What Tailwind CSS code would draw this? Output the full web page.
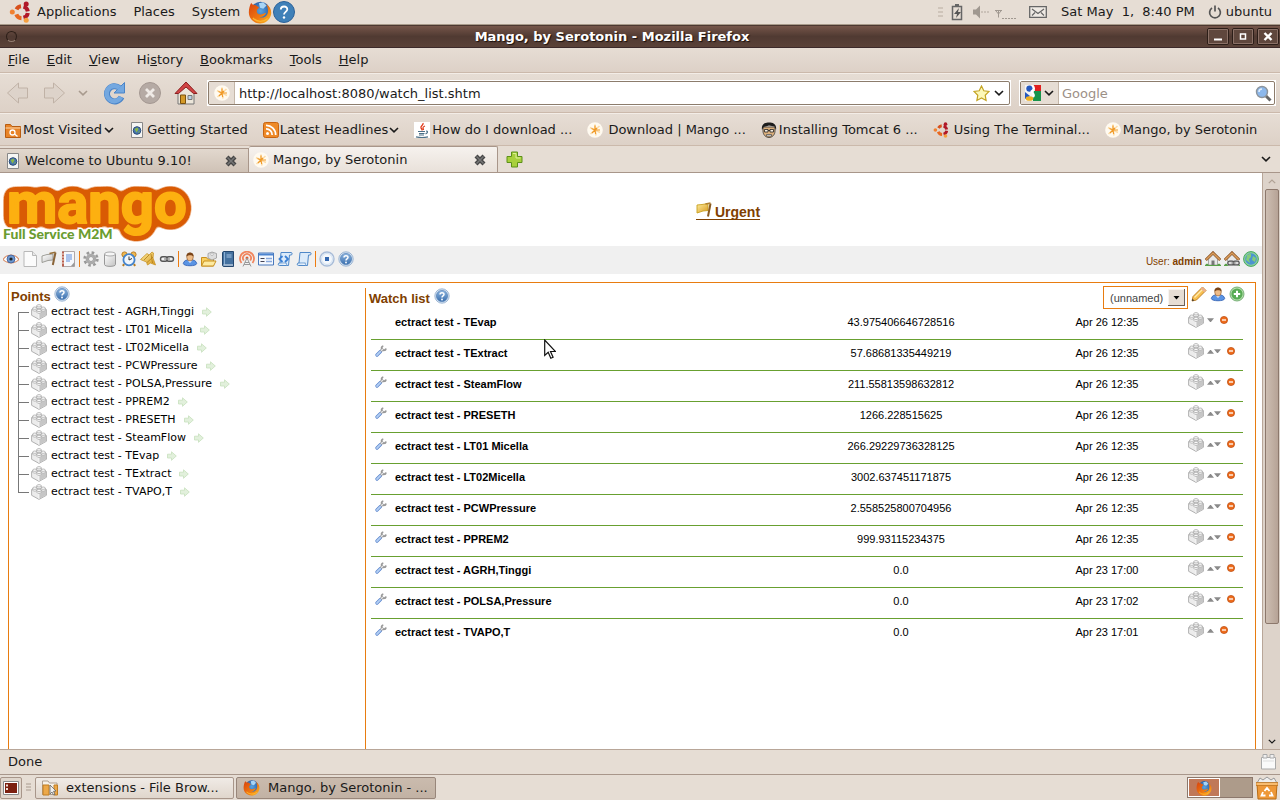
<!DOCTYPE html>
<html lang="en">
<head>
  <meta charset="UTF-8" />
  <meta name="viewport" content="width=device-width, initial-scale=1.0" />
  <title>Mango, by Serotonin</title>
  <script src="https://cdn.jsdelivr.net/npm/@tailwindcss/browser@4"></script>
</head>
<body class="h-screen flex flex-col overflow-hidden bg-[#e6ddd4] font-['DejaVu_Sans',sans-serif] text-[13px] leading-4 text-[#1a1a1a]">

<!-- Icon sprite -->
<svg class="absolute size-0">
  <defs>
    <linearGradient id="gBlue" x1="0" y1="0" x2="0" y2="1"><stop offset="0" stop-color="#8fb6e0"/><stop offset="1" stop-color="#3a6fae"/></linearGradient>
    <linearGradient id="gFox" x1="0" y1="0" x2="1" y2="1"><stop offset="0" stop-color="#d8400c"/><stop offset=".6" stop-color="#f07c12"/><stop offset="1" stop-color="#fbc02a"/></linearGradient>
    <linearGradient id="gGrey" x1="0" y1="0" x2="1" y2="1"><stop offset="0" stop-color="#fff"/><stop offset="1" stop-color="#c2c2c2"/></linearGradient>
    <linearGradient id="gGold" x1="0" y1="0" x2="1" y2="1"><stop offset="0" stop-color="#fdeea0"/><stop offset="1" stop-color="#d99a20"/></linearGradient>
    <radialGradient id="gGlobe"><stop offset="0" stop-color="#5aa4e0"/><stop offset="1" stop-color="#2d62a8"/></radialGradient>
    <!-- fat rounded outline around the logo lettering -->
    <filter id="outline" x="-10%" y="-20%" width="120%" height="140%" color-interpolation-filters="sRGB">
      <feGaussianBlur in="SourceAlpha" stdDeviation="4"/>
      <feComponentTransfer result="fat"><feFuncA type="linear" slope="16" intercept="-1"/></feComponentTransfer>
      <feFlood flood-color="#d95b04"/>
      <feComposite in2="fat" operator="in"/>
      <feMerge><feMergeNode/><feMergeNode in="SourceGraphic"/></feMerge>
    </filter>
  </defs>
  <symbol id="ubuntu" viewBox="0 0 22 22">
    <g fill="none" stroke-width="4">
      <path d="M7.500 8.300A5.800 5.800 0 0 1 12 5.200" stroke="#d8501c"/>
      <path d="M14.500 5.600A6 6 0 0 1 18.800 10.300" stroke="#b01828"/>
      <path d="M18.800 12A6 6 0 0 1 14.500 16.800" stroke="#b01828"/>
      <path d="M12.500 17.200A5.800 5.800 0 0 1 7.300 13.300" stroke="#e86820"/>
    </g>
    <circle cx="3.300" cy="11" r="2.500" fill="#f08030"/><circle cx="17.200" cy="3" r="2.500" fill="#b01828"/><circle cx="17.200" cy="19.200" r="2.500" fill="#f5a040"/>
  </symbol>
  <symbol id="firefox" viewBox="0 0 22 22">
    <circle cx="11.500" cy="10" r="8.500" fill="url(#gGlobe)"/>
    <path d="M10 3l4-1 3 3-3 3-3-1z" fill="#a8d4f4"/>
    <path d="M3 2.500C3.500 4 4.500 4.500 6.500 4.500 8 4.800 8.500 6 10 6.500 10 8 8 8.500 8 10 8 12 9.500 13.500 12 13.200 14 13 15 11.500 16.500 12 15.500 15 12.500 16 10.500 15.500 14.500 17.500 18.500 14.500 18.300 10 18.500 7.500 17.500 5.500 16.500 4 20.500 6 22 10 21 14 19.500 19 15 22 10.500 21.500 5 21 1 17 .8 12 .600 9 1.500 5 3 2.500z" fill="url(#gFox)"/>
    <path d="M4.500 16.500C8 20.500 14 20.500 18 17" fill="none" stroke="#fcb42c" stroke-width="1.300"/>
  </symbol>
  <symbol id="help" viewBox="0 0 16 16">
    <circle cx="8" cy="8" r="7.200" fill="#d4e2f2" stroke="#8aa8cc" stroke-width=".8"/>
    <circle cx="8" cy="8" r="5.600" fill="url(#gBlue)" stroke="#4a78b0" stroke-width=".6"/>
    <path d="M6 6.600C6 4.200 10 4.200 10 6.500 10 8 8 7.800 8 9.500" fill="none" stroke="#fff" stroke-width="1.500"/><circle cx="8" cy="11.500" r=".9" fill="#fff"/>
  </symbol>
  <symbol id="chev" viewBox="0 0 10 6"><path d="M1 1l4 3.800L9 1" fill="none" stroke="currentColor" stroke-width="1.600"/></symbol>
  <symbol id="mangoicon" viewBox="0 0 16 16">
    <circle cx="8" cy="8" r="7.800" fill="#fffaf0"/>
    <path d="M8 8V2.500M8 8L3 5.500M8 8l-4.500 4M8 8l1 5.500M8 8l5 2.500M8 8l4.500-4" stroke="#fcdca8" stroke-width="1.600"/>
    <path d="M8 8V3.500M8 8L4.500 6.500M8 8l-3 3M8 8l.7 4M8 8h5M8 8l2-2" stroke="#f09a28" stroke-width="1.100"/>
  </symbol>
  <symbol id="doc" viewBox="0 0 16 16">
    <path d="M2.500.500h11v15h-11z" fill="#f6f6f4" stroke="#888"/><circle cx="8" cy="8.500" r="3.800" fill="#4878b0" stroke="#2c4c78"/><path d="M5.500 7l3-1.500 1 2-2 3zM9 10l2-1-1 2z" fill="#8cb848"/>
  </symbol>
  <symbol id="closex" viewBox="0 0 14 14"><path d="M3 3l8 8M11 3l-8 8" stroke="#454545" stroke-width="4.200"/><path d="M3.500 3.500l7 7M10.500 3.500l-7 7" stroke="#777" stroke-width="1.500"/></symbol>
  <symbol id="brick" viewBox="0 0 16 16">
    <path d="M.6 5.500L8 2l7.400 3.500v5.800L8 15.400.6 11.300z" fill="#ececec" stroke="#a0a0a0" stroke-width=".8"/>
    <path d="M8 8.800l7-3.200v5.500L8 15z" fill="#c6c6c6"/><path d="M8 8.800V15" stroke="#fff" stroke-width=".7"/>
    <g fill="#fafafa" stroke="#a0a0a0" stroke-width=".7">
      <path d="M5.800 1.800v2c0 1.300 4.400 1.300 4.400 0v-2"/><ellipse cx="8" cy="1.800" rx="2.200" ry="1.200"/>
      <path d="M1.700 4.200v2c0 1.300 4.200 1.300 4.200 0v-2"/><ellipse cx="3.800" cy="4.200" rx="2.100" ry="1.200"/>
      <path d="M10.100 4.200v2c0 1.300 4.200 1.300 4.200 0v-2"/><ellipse cx="12.200" cy="4.200" rx="2.100" ry="1.200"/>
      <path d="M5.900 6.400v2c0 1.300 4.200 1.300 4.200 0v-2"/><ellipse cx="8" cy="6.400" rx="2.100" ry="1.200"/>
    </g>
  </symbol>
  <symbol id="arrow" viewBox="0 0 10 10"><path d="M.5 3.200h4V.8L9.300 5 4.500 9.300V7h-4z" fill="#e2f0dc" stroke="#c6dfbd" stroke-width=".8"/></symbol>
  <symbol id="up" viewBox="0 0 8 5"><path d="M0 5h8L4.500.800h-1z" fill="#8a8a8a"/></symbol>
  <symbol id="down" viewBox="0 0 8 5"><path d="M0 0h8L4.500 4.200h-1z" fill="#8a8a8a"/></symbol>
  <symbol id="minus" viewBox="0 0 8 8"><circle cx="4" cy="4" r="3.600" fill="#ee6c1c" stroke="#b8480c" stroke-width=".7"/><path d="M2 4h4" stroke="#fff" stroke-width="1.300"/></symbol>
  <symbol id="wrench" viewBox="0 0 12 12"><path d="M2 10L5.500 6.500" stroke="#5a84cc" stroke-width="3.200" stroke-linecap="round"/><path d="M2 10L5.300 6.700" stroke="#b4d0f4" stroke-width="1.800" stroke-linecap="round"/><path d="M5.800 6L8.200 3.800" stroke="#999" stroke-width="2.600"/><path d="M11 3.500A2.200 2.200 0 1 1 8.300 1" fill="none" stroke="#999" stroke-width="1.800"/><path d="M6 5.800L8 4" stroke="#e4e4e4" stroke-width="1.200"/></symbol>
  <symbol id="flag" viewBox="0 0 16 16"><path d="M1 5l5-1.500 6-.5v6l-5 .5-6 2z" fill="url(#gGrey)" stroke="#8c8c84" stroke-width=".8"/><path d="M14.500 1.500L11.800 14" stroke="#8a6438" stroke-width="2"/><path d="M8.500 2.500l6-1.200" stroke="#96703a" stroke-width="1.500"/></symbol>
  <symbol id="goldflag" viewBox="0 0 16 16"><path d="M1 3l5-.500 6-1v7l-5 .5-6 2z" fill="url(#gGold)" stroke="#c8a020" stroke-width=".9"/><path d="M14.500 1.500L12 14.500" stroke="#8a5a20" stroke-width="2"/><path d="M9.500 2l5-1" stroke="#b08030" stroke-width="1.500"/></symbol>
  <symbol id="user" viewBox="0 0 16 16">
    <path d="M1.300 12.500C2 9.500 4 8.800 8 8.800s6 .7 6.700 3.700C14.500 15.500 1.500 15.500 1.300 12.500z" fill="#5a94e4" stroke="#2c5cb0" stroke-width=".8"/>
    <path d="M5.500 9.200L8 12l2.500-2.800z" fill="#e8f0fc"/><ellipse cx="8" cy="6" rx="3.300" ry="4" fill="#eebc88" stroke="#8a5424" stroke-width=".6"/>
    <path d="M4.500 5.500C3.800 0 12.200 0 11.500 5.500 10 3.800 6.500 3.600 4.500 5.500z" fill="#7a4418"/>
  </symbol>
  <symbol id="house" viewBox="0 0 16 16">
    <path d="M3.500 8L8 3.500 12.500 8v6h-9z" fill="#e8e8e8" stroke="#8c8c8c" stroke-width=".7"/><path d="M.8 9L8 1.800 15.200 9" fill="none" stroke="#8a5020" stroke-width="2.800"/><path d="M1.200 8.600L8 2l6.800 6.600" fill="none" stroke="#d89c5c" stroke-width="1.500"/>
    <path d="M6.500 9.500h3V14h-3z" fill="#777"/><path d="M0 14.500c1-2.500 3-2.500 4 0M12 14.500c1-2.500 3-2.500 4 0z" fill="#58a048"/><path d="M0 14.500h16" stroke="#58a048"/>
  </symbol>
  <symbol id="chain" viewBox="0 0 16 16"><g fill="none" stroke="#555" stroke-width="1.400"><rect x="1.500" y="5.800" width="7" height="4.400" rx="2.200"/><rect x="7.500" y="5.800" width="7" height="4.400" rx="2.200"/></g><path d="M5 8h6" stroke="#999" stroke-width="1.400"/></symbol>
  <symbol id="scroll" viewBox="0 0 16 16"><path d="M4 1.500h10c1.500 0 1.500 2.500 0 2.500h-1.500L11.500 14.500H2.500C.8 14.500.8 12 2.500 12H3z" fill="#dcebfa" stroke="#4f88c8"/><path d="M2.500 12h7c-.8 1 0 2 1.200 2.400" fill="#fff" stroke="#4f88c8" stroke-width=".8"/></symbol>
</svg>

<!-- Desktop panel -->
<header class="h-[25px] shrink-0 flex items-center border-b border-[#a89a8a] pl-2 pr-2">
  <svg class="w-[24px] h-[22px]"><use href="#ubuntu"/></svg>
  <nav class="flex gap-[17px] pl-[5px]">
    <button>Applications</button><button>Places</button><button>System</button>
  </nav>
  <button class="ml-2" aria-label="Firefox"><svg class="size-6"><use href="#firefox"/></svg></button>
  <button aria-label="Help">
    <svg class="size-6" viewBox="0 0 24 24"><circle cx="12" cy="12" r="10.500" fill="#3f80b8" stroke="#2c629a"/><path d="M8.800 9.500C8.800 5.500 15.500 5.500 15.300 9.500 15 11.800 12 12 12 14.500" fill="none" stroke="#fff" stroke-width="1.800"/><circle cx="12" cy="17.500" r="1.200" fill="#fff"/></svg>
  </button>
  <div class="ml-auto flex items-center">
    <svg class="w-[5px] h-3 mr-2" viewBox="0 0 5 12"><path d="M0 2h5M0 6h5M0 10h5" stroke="#b8aca0"/></svg>
    <svg class="w-3 h-[18px] mr-[10px]" viewBox="0 0 12 18"><path d="M1.500 3.500h9v13h-9z" fill="none" stroke="#666" stroke-width="1.500"/><path d="M4 1h4v2H4z" fill="#666"/><path d="M8 5l-5 6h3l-1 4 5-6H7z" fill="#555"/></svg>
    <svg class="w-4 h-[14px] mr-[6px]" viewBox="0 0 16 14"><path d="M0 4.500h3l4-4v13l-4-4H0z" fill="#a09890"/><path d="M8 7h8" stroke="#b0a69c" stroke-dasharray="2 1"/></svg>
    <svg class="w-[22px] h-[14px] mr-3 mt-2" viewBox="0 0 22 14"><path d="M0 1.500h7M1 2l2.500 3L6 2M3.500 1v7.500" fill="none" stroke="#a09890"/><path d="M7 9.500h15" stroke="#a09890" stroke-dasharray="2 1"/></svg>
    <svg class="w-[18px] h-3 mr-[14px]" viewBox="0 0 18 12"><path d="M.7.700h16.600v10.600H.7z" fill="#efeae4" stroke="#666" stroke-width="1.300"/><path d="M3 3l6 4.500L15 3M3 9.500l3-3M15 9.500l-3-3" fill="none" stroke="#666" stroke-width="1.200"/></svg>
    <button class="whitespace-pre">Sat May  1,  8:40 PM</button>
    <svg class="w-[14px] h-[14px] ml-[13px] mr-1" viewBox="0 0 14 14"><path d="M4 3a5.400 5.400 0 1 0 6 0M7 .500v6" fill="none" stroke="#555" stroke-width="1.700"/></svg>
    <button>ubuntu</button>
  </div>
</header>

<!-- Window title bar -->
<div class="h-[23px] shrink-0 flex items-center border-y border-t-[#4c3830] border-b-[#3c2a2a] bg-linear-to-b from-[#76564a] via-[#503a32] to-[#5a4238] px-[6px]">
  <button class="size-[11px] rounded-full border border-[#2c1e18] border-b-[#927c70]" aria-label="Window menu"></button>
  <h1 class="flex-1 text-center font-bold text-white [text-shadow:1px_1px_1px_#1a100c]">Mango, by Serotonin - Mozilla Firefox</h1>
  <div class="flex gap-[3px] -mr-[5px]">
    <button class="w-[22px] h-[17px] border border-[#2c1e18] bg-[#5f473d] rounded-xs" aria-label="Minimize"><svg class="size-full" viewBox="0 0 20 15"><path d="M.5.500h19v14H.5z" fill="none" stroke="#8a7066"/><path d="M6 10.500h8" stroke="#fff" stroke-width="2"/></svg></button>
    <button class="w-[22px] h-[17px] border border-[#2c1e18] bg-[#5f473d] rounded-xs" aria-label="Maximize"><svg class="size-full" viewBox="0 0 20 15"><path d="M.5.500h19v14H.5z" fill="none" stroke="#8a7066"/><path d="M7.500 5h5v5h-5z" fill="none" stroke="#fff" stroke-width="1.500"/></svg></button>
    <button class="w-[22px] h-[17px] border border-[#2c1e18] bg-[#5f473d] rounded-xs" aria-label="Close"><svg class="size-full" viewBox="0 0 20 15"><path d="M.5.500h19v14H.5z" fill="none" stroke="#8a7066"/><path d="M6.500 4l7 7M13.500 4l-7 7" stroke="#fff" stroke-width="2.400"/></svg></button>
  </div>
</div>

<!-- Menu bar -->
<nav class="h-[25px] shrink-0 flex items-center gap-px bg-linear-to-b from-[#e6ddd4] to-[#ddd1c7] border-b border-[#cbb9ab]">
  <button class="px-2"><u>F</u>ile</button>
  <button class="px-2"><u>E</u>dit</button>
  <button class="px-2"><u>V</u>iew</button>
  <button class="px-2">Hi<u>s</u>tory</button>
  <button class="px-2"><u>B</u>ookmarks</button>
  <button class="px-2"><u>T</u>ools</button>
  <button class="px-2"><u>H</u>elp</button>
</nav>

<!-- Navigation toolbar -->
<div class="h-10 shrink-0 flex items-center bg-linear-to-b from-[#e6ddd4] to-[#ddd1c7] border-t border-t-[#f3ede7] border-b border-b-[#cbb9ab] pl-[6px] pr-1">
  <button class="mr-3" aria-label="Back"><svg class="size-6" viewBox="0 0 24 24"><path d="M1.500 12L12.500 2v5h9v10h-9v5z" fill="#ddd3ca" stroke="#c0b2a6"/></svg></button>
  <button class="mr-3" aria-label="Forward"><svg class="size-6" viewBox="0 0 24 24"><path d="M22.500 12L11.500 2v5h-9v10h9v5z" fill="#ddd3ca" stroke="#c0b2a6"/></svg></button>
  <button class="mr-[14px] text-[#a89a8e]" aria-label="Recent pages"><svg class="w-[10px] h-[6px]"><use href="#chev"/></svg></button>
  <button class="mr-3" aria-label="Reload"><svg class="size-6" viewBox="0 0 24 24"><path d="M17.500 7A7.600 7.600 0 1 0 19.500 16" fill="none" stroke="#4a84c8" stroke-width="6"/><path d="M22.500 1.500V12H12z" fill="#74a8e0" stroke="#4a84c8"/><path d="M17.500 7A7.600 7.600 0 1 0 19 16" fill="none" stroke="#74a8e0" stroke-width="4.500"/></svg></button>
  <button class="mr-3" aria-label="Stop"><svg class="size-6" viewBox="0 0 24 24"><circle cx="12" cy="12" r="10.500" fill="#b5aaa4" stroke="#a49892"/><path d="M8 8l8 8M16 8l-8 8" stroke="#efeae6" stroke-width="2.800"/></svg></button>
  <button class="mr-[9px]" aria-label="Home"><svg class="size-6" viewBox="0 0 24 24"><path d="M4 11l8-8 8 8v12H4z" fill="#ece6da" stroke="#777"/><path d="M12 1L1 12.500h3.500L12 6l7.500 6.500H23z" fill="#d04444" stroke="#8c2020"/><path d="M6.500 14h5v8.500h-5z" fill="#d49a28" stroke="#7a5210"/><path d="M14 14.500h4v4h-4z" fill="#b8d0e4" stroke="#777"/></svg></button>
  <div class="flex-1 h-[26px] border border-white bg-white">
    <div class="h-full flex items-center rounded-xs border border-[#8c7c6c]">
      <span class="w-[26px] h-full flex items-center justify-center bg-[#e6ddd4] border-r border-[#c4b6a8]"><svg class="size-4"><use href="#mangoicon"/></svg></span>
      <input class="flex-1 h-full pl-1 outline-none bg-white" aria-label="Location" value="http://localhost:8080/watch_list.shtm">
      <button class="mr-1" aria-label="Bookmark this page"><svg class="size-[17px]" viewBox="0 0 17 17"><path d="M8.500 1l2.300 4.800 5.200.7-3.800 3.700.9 5.300-4.600-2.500-4.600 2.500.9-5.300L1 6.500l5.200-.7z" fill="#fdf8b8" stroke="#c4a424" stroke-width="1.200"/></svg></button>
      <button class="mr-[5px]" aria-label="Show history"><svg class="w-[10px] h-[6px]"><use href="#chev"/></svg></button>
    </div>
  </div>
  <div class="w-[257px] ml-2 h-[26px] border border-white bg-white">
    <div class="h-full flex items-center rounded-xs border border-[#8c7c6c]">
      <button class="w-[38px] h-full flex items-center justify-center gap-[3px] bg-[#e6ddd4] border-r border-[#c4b6a8]" aria-label="Search engine">
        <svg class="size-4" viewBox="0 0 16 16"><path d="M0 0h10v16H0z" fill="#f4f4f4"/><path d="M8 0h8v6H10z" fill="#e02020"/><path d="M9 6h7v10H8V9z" fill="#18944c"/><circle cx="4.500" cy="3.600" r="3.200" fill="#2458c0"/><path d="M0 7l5 4-5 3z" fill="#2458c0"/><path d="M7 0c3 3 2 5 0 6s4 3 1 6" fill="none" stroke="#fff" stroke-width="2.200"/><ellipse cx="4.500" cy="13.500" rx="3.800" ry="2.300" fill="#f0b020"/></svg>
        <svg class="w-[10px] h-[6px]"><use href="#chev"/></svg>
      </button>
      <input class="flex-1 min-w-0 h-full pl-[3px] outline-none bg-white placeholder:text-[#9c9086]" aria-label="Search" placeholder="Google">
      <button class="mr-[2px]" aria-label="Go"><svg class="size-[17px]" viewBox="0 0 17 17"><path d="M10.500 10.500l5 5" stroke="#666" stroke-width="3"/><circle cx="7" cy="7" r="5.500" fill="#8cb8ec" stroke="#8c949c" stroke-width="1.400"/><path d="M4 7a3 3 0 0 1 3-3" fill="none" stroke="#e4f0fc" stroke-width="1.500"/></svg></button>
    </div>
  </div>
</div>

<!-- Bookmarks toolbar -->
<nav class="h-[33px] shrink-0 flex items-center gap-[15px] bg-linear-to-b from-[#e6ddd4] to-[#ddd1c7] border-t border-t-[#f3ede7] border-b border-b-[#cbb9ab] pl-[5px] whitespace-nowrap">
  <button class="flex items-center gap-[2px]"><svg class="size-4" viewBox="0 0 16 16"><path d="M.5 15.500v-13h5l1.500 2h8.500v11z" fill="#e88428" stroke="#b85c10"/><path d="M.5 6h15" stroke="#fbd8b0"/><circle cx="7.500" cy="10.500" r="2.500" fill="none" stroke="#fff" stroke-width="1.300"/><path d="M9.500 12l3 2.500" stroke="#fff" stroke-width="1.300"/></svg>Most Visited<svg class="w-[10px] h-[6px]"><use href="#chev"/></svg></button>
  <a href="#" class="flex items-center gap-[2px]"><svg class="size-4"><use href="#doc"/></svg>Getting Started</a>
  <button class="flex items-center gap-px"><svg class="size-4" viewBox="0 0 16 16"><rect x=".5" y=".5" width="15" height="15" rx="2" fill="#ee8a28" stroke="#c86410"/><circle cx="4.500" cy="11.500" r="1.500" fill="#fff"/><path d="M3 6.800A6 6 0 0 1 9.200 13M3 3.300A9.500 9.500 0 0 1 12.700 13" fill="none" stroke="#fff" stroke-width="1.700"/></svg>Latest Headlines<svg class="w-[10px] h-[6px]"><use href="#chev"/></svg></button>
  <a href="#" class="flex items-center gap-[2px]"><svg class="size-4" viewBox="0 0 16 16"><path d="M0 0h16v16H0z" fill="#fff"/><path d="M9 1c1 2-3 3-2 5 .5 1 1.500 1 .8 2.500M11 4C8 5 9 6 9.500 8" fill="none" stroke="#e03818" stroke-width="1.300"/><path d="M4 9.500h7M5 11.500h5.500M5 13h5M2 14.800c3 .8 9 .8 12 0M12 9c2 0 2 2-.5 3" fill="none" stroke="#4c7088" stroke-width="1.200"/></svg>How do I download ...</a>
  <a href="#" class="flex items-center gap-[5px]"><svg class="size-4"><use href="#mangoicon"/></svg>Download | Mango ...</a>
  <a href="#" class="flex items-center gap-[2px]"><svg class="size-4" viewBox="0 0 16 16"><path d="M2 5h12v4c0 4-3 6.500-6 6.500S2 13 2 9z" fill="#dcb07c" stroke="#333" stroke-width=".8"/><path d="M1 8C0 2 4 .500 8 .500S16 2 15 8l-1.500-3.500-5.500-1L2.500 5z" fill="#1c1c1c"/><path d="M3.500 7.500h3.500v2.500H3.500zM9 7.500h3.500v2.500H9zM7 8.500h2" fill="#f4ece0" stroke="#222" stroke-width=".8"/><path d="M5.500 12.500h5v1.500h-5z" fill="#fff" stroke="#444" stroke-width=".7"/></svg>Installing Tomcat 6 ...</a>
  <a href="#" class="flex items-center gap-[5px]"><svg class="size-4"><use href="#ubuntu"/></svg>Using The Terminal...</a>
  <a href="#" class="flex items-center gap-[2px]"><svg class="size-4"><use href="#mangoicon"/></svg>Mango, by Serotonin</a>
</nav>

<!-- Tab strip -->
<div class="h-[27px] shrink-0 flex items-end border-b border-[#a8968a]">
  <button class="w-[249px] h-6 flex items-center gap-1 pl-[5px] pr-[10px] border-t border-r border-[#a8968a] bg-linear-to-b from-[#e2d8ce] to-[#cfc2b6]"><svg class="size-4"><use href="#doc"/></svg>Welcome to Ubuntu 9.10!<svg class="size-[14px] ml-auto"><use href="#closex"/></svg></button>
  <button class="w-[249px] h-[26px] flex items-center gap-1 pl-1 pr-[10px] border-t border-r border-[#a8968a] rounded-t-xs bg-linear-to-b from-[#f6f2ee] to-[#e9e1da]"><svg class="size-4"><use href="#mangoicon"/></svg>Mango, by Serotonin<svg class="size-[14px] ml-auto"><use href="#closex"/></svg></button>
  <button class="ml-2 mb-1" aria-label="New tab"><svg class="size-[17px]" viewBox="0 0 17 17"><path d="M5.500 1h6v4.500H16v6h-4.500V16h-6v-4.500H1v-6h4.500z" fill="#a8d03c" stroke="#5c9018"/><path d="M7 2.500h3V7h4.500" fill="none" stroke="#dcf094"/></svg></button>
  <button class="ml-auto mr-[9px] mb-[10px]" aria-label="List all tabs"><svg class="w-[10px] h-[6px]"><use href="#chev"/></svg></button>
</div>

<!-- Page -->
<div class="flex-1 min-h-0 flex bg-white">
  <main class="flex-1 min-w-0 flex flex-col overflow-hidden font-['Liberation_Sans',sans-serif] text-black">

    <div class="h-[73px] shrink-0 flex">
      <svg class="w-[194px] h-[73px]" viewBox="0 0 194 73">
        <text x="7" y="50" font-family="Roboto, sans-serif" font-weight="700" font-size="58" fill="#fdb010" stroke="#fdb010" stroke-width="2" stroke-linejoin="round" filter="url(#outline)">mango</text>
        <text x="3" y="66" font-family="Lato, sans-serif" font-weight="900" font-size="14" fill="#6a9c30" stroke="#fff" stroke-width="3" paint-order="stroke">Full Service M2M</text>
      </svg>
      <div class="flex-1 flex justify-center pt-[29px]">
        <a href="#" class="h-[18px] flex items-start gap-[3px] border-b border-[#804000] text-sm font-bold text-[#804000]"><svg class="size-4"><use href="#goldflag"/></svg><span class="leading-[20px]">Urgent</span></a>
      </div>
    </div>

    <div class="h-7 shrink-0 flex items-center gap-[3px] bg-[#f0f0f0] px-[3px] pb-[2px]">
      <svg class="size-4" viewBox="0 0 16 16"><path d="M0 8.500C4 2.500 12 2.500 16 8.500 12 13 4 13 0 8.500z" fill="#fff" stroke="#d8906c" stroke-width="1.200"/><circle cx="8" cy="8" r="4" fill="#6c98d0" stroke="#3c5c98" stroke-width=".8"/><circle cx="8" cy="8" r="1.600" fill="#222"/></svg>
      <svg class="size-4" viewBox="0 0 16 16"><path d="M2 .500h8.500l4 4v11H2z" fill="#fbfbfb" stroke="#b8b8b8"/><path d="M10.500.500v4h4" fill="#e8e8e8" stroke="#b8b8b8"/></svg>
      <svg class="size-4"><use href="#flag"/></svg>
      <svg class="size-4" viewBox="0 0 16 16"><path d="M2.500.500h12v15h-12z" fill="#f6f8fc" stroke="#b0a8a8"/><path d="M3 .500v15" stroke="#b86050" stroke-width="2"/><path d="M1 3h3M1 6h3M1 9h3M1 12h3" stroke="#f0e0d8"/><path d="M6 4h6M6 6h6M6 8h6M6 10h4" stroke="#5c8cdc"/><path d="M11 15l3.500-4v4.500z" fill="#999"/></svg>
      <span class="w-px h-4 bg-[#ee7c10]"></span>
      <svg class="size-4" viewBox="0 0 16 16"><circle cx="8" cy="8" r="6.400" fill="none" stroke="#999" stroke-width="2.600" stroke-dasharray="2.600 2.400"/><circle cx="8" cy="8" r="4" fill="#eee" stroke="#aaa" stroke-width="2.600"/><circle cx="8" cy="8" r="2.500" fill="#f4f4f4" stroke="#888" stroke-width=".8"/></svg>
      <svg class="size-4" viewBox="0 0 16 16"><path d="M2.500 3v10.500c0 2.500 11 2.500 11 0V3" fill="url(#gGrey)" stroke="#999"/><ellipse cx="8" cy="3" rx="5.500" ry="2" fill="#f6f6f6" stroke="#aaa"/></svg>
      <svg class="size-4" viewBox="0 0 16 16"><path d="M3 13l-1 2M13 13l1 2" stroke="#b87c20" stroke-width="2"/><circle cx="3.500" cy="3.500" r="2.600" fill="#f0b850" stroke="#b87c20"/><circle cx="12.500" cy="3.500" r="2.600" fill="#f0b850" stroke="#b87c20"/><circle cx="8" cy="8.700" r="5.600" fill="#f0f6fc" stroke="#4484cc" stroke-width="1.800"/><path d="M8 5.500v3.500l3-1.500" fill="none" stroke="#333"/></svg>
      <svg class="size-4" viewBox="0 0 16 16"><path d="M.5 8.500L7 2.500l2 1.500 3-3 1.500 1-.5 5 2.500 7-5-2-3 2-1-3z" fill="url(#gGold)" stroke="#c89428" stroke-width=".8"/><path d="M4 9l5-5M7 11.500l6-5.500M11 3l1.500 9" stroke="#b07c18" stroke-width=".8"/></svg>
      <svg class="size-4"><use href="#chain"/></svg>
      <span class="w-px h-4 bg-[#ee7c10]"></span>
      <svg class="size-4"><use href="#user"/></svg>
      <svg class="size-4" viewBox="0 0 16 16"><path d="M.5 15V6.500h5l1 1.500h6V15z" fill="#f8d060" stroke="#c89020"/><path d="M.5 15L3 10h12l-2.500 5z" fill="#fdeaa0" stroke="#c89020"/><path d="M7 2.500L11 1l4.500 1.500V7L11 9 7 7z" fill="#ddd" stroke="#999" stroke-width=".8"/><circle cx="11" cy="3.200" r="1.300" fill="#fff" stroke="#999" stroke-width=".6"/></svg>
      <svg class="size-4" viewBox="0 0 16 16"><path d="M2.500 14V2c0-1 .5-1.500 1.500-1.500h9.500v15H4c-1 0-1.500-.5-1.500-1.500z" fill="#44719f" stroke="#24476f"/><path d="M4.500 1v12.500" stroke="#8cb0d4"/><path d="M6.500 4h5M6.500 6h5" stroke="#a4c4e4"/><path d="M3.500 14h9.500" stroke="#e8eef4"/></svg>
      <svg class="size-4" viewBox="0 0 16 16"><g fill="none" stroke="#f0845c" stroke-width="1.800"><path d="M2.500 12a7 7 0 1 1 11 0"/><path d="M4.800 9.500a4 4 0 1 1 6.400 0"/></g><circle cx="8" cy="7" r="1.500" fill="#e05c30"/><path d="M8 7L4 15.500M8 7l4 8.500M6 11.500h4M5 13.500h6" fill="none" stroke="#999"/></svg>
      <svg class="size-4" viewBox="0 0 16 16"><path d="M.5 2h15v12H.5z" fill="#f4f8fe" stroke="#4878bc"/><path d="M1 3.500h14" stroke="#4c84d0" stroke-width="2"/><path d="M2.500 7.500h4M2.500 10.500h4" stroke="#445"/><path d="M8 7.500h6M8 10.500h6" stroke="#88a8dc" stroke-width="1.500"/></svg>
      <svg class="size-4" viewBox="0 0 16 16"><use href="#scroll"/><path d="M5.500 5L2.500 8l3 3M8 5l3 3-3 3" fill="none" stroke="#3c80d4" stroke-width="1.800"/></svg>
      <svg class="size-4"><use href="#scroll"/></svg>
      <span class="w-px h-4 bg-[#ee7c10]"></span>
      <svg class="size-4" viewBox="0 0 16 16"><circle cx="8" cy="8" r="7" fill="#f4f8fc" stroke="#a8bcd8" stroke-width="1.400"/><circle cx="8" cy="8" r="5.500" fill="none" stroke="#d0dff0"/><path d="M6 6h4v4H6z" fill="#3468b0"/></svg>
      <svg class="size-4"><use href="#help"/></svg>
      <div class="ml-auto flex items-center gap-[3px] text-[10px] text-[#804000]">
        <span class="pt-[6px]">User: <b>admin</b></span>
        <svg class="size-4"><use href="#house"/></svg>
        <svg class="size-4" viewBox="0 0 16 16"><use href="#house"/><rect x="3" y="9" width="13" height="6" rx="3" fill="#ddd"/><g transform="translate(2.500 4)"><use href="#chain" width="14" height="16"/></g></svg>
        <svg class="size-4" viewBox="0 0 16 16"><circle cx="8" cy="8" r="7.400" fill="#8cd09c" stroke="#48a860"/><circle cx="8" cy="8" r="5.800" fill="#4c94d0"/><path d="M4 4l4-1.500L8 6 6 8l1 4-4-3zM10 5l3 2-1 4-3-2z" fill="#84cc78"/></svg>
      </div>
    </div>

    <div class="mt-2 ml-2 mr-[6px] flex-1 flex border border-b-0 border-[#e87c10]">
      <!-- Data points -->
      <section class="w-[356px] pl-[2px] pt-[3px]">
        <h2 class="h-4 flex items-start gap-[3px] text-[13px] font-bold text-[#804000]"><span class="pt-[3px]">Points</span><svg class="size-4"><use href="#help"/></svg></h2>
        <ul id="points" class="pt-px font-['DejaVu_Sans',sans-serif] text-[11px]"></ul>
      </section>

      <!-- Watch list -->
      <section class="flex-1 mt-[5px] border-l border-[#e87c10] pl-[5px] pr-3">
        <div class="h-[21px] flex items-start justify-between">
          <h2 class="-ml-[2px] flex items-start gap-1 text-[13px] font-bold text-[#804000]"><span class="pt-[3px]">Watch list</span><svg class="size-4"><use href="#help"/></svg></h2>
          <div class="flex items-start gap-[3px] -mt-[2px] -mr-[2px]">
            <div class="relative">
              <select class="block w-[85px] h-[23px] appearance-none border border-[#e87c10] bg-white pl-[6px] text-[11px] text-[#444] outline-none" aria-label="Watch list">
                <option>(unnamed)</option>
              </select>
              <svg class="absolute right-[3px] top-[3px] w-[17px] h-[17px] pointer-events-none" viewBox="0 0 17 17"><path d="M0 0h17v17H0z" fill="#6c6058"/><path d="M0 0h16v16H0z" fill="#f8f4f0"/><path d="M1 1h15v15H1z" fill="#e6ddd4"/><path d="M5.500 7h6L8.500 10.500z" fill="#000"/></svg>
            </div>
            <button aria-label="Edit name"><svg class="size-4" viewBox="0 0 16 16"><path d="M1 15l1-4.500L11.500 1l3.500 3.500L5.500 14z" fill="#f8c050" stroke="#b87820" stroke-width=".9"/><path d="M3.500 11.500l8.500-8.500" stroke="#fdeab0" stroke-width="1.300"/><path d="M11.500 1L15 4.500l-1.700 1.700-3.500-3.500z" fill="#ecb090"/><path d="M1 15l.6-2.200 1.600 1.600z" fill="#333"/></svg></button>
            <button aria-label="Users"><svg class="size-4"><use href="#user"/></svg></button>
            <button aria-label="Add watch list"><svg class="size-4" viewBox="0 0 16 16"><circle cx="8" cy="8" r="7" fill="#b8e0b0" stroke="#60a060" stroke-width=".8"/><circle cx="8" cy="8" r="5.600" fill="#58ac54"/><path d="M8 4.800v6.400M4.800 8h6.400" stroke="#fff" stroke-width="2"/></svg></button>
          </div>
        </div>
        <table class="w-full table-fixed border-separate border-spacing-0 text-[11px] leading-[14px]">
          <colgroup><col class="w-6"><col><col class="w-[250px]"><col class="w-[162px]"><col class="w-[55px]"></colgroup>
          <tbody id="watch"></tbody>
        </table>
      </section>
    </div>
  </main>

  <!-- Scrollbar -->
  <div class="w-[18px] flex flex-col items-center border-l border-[#b8a698] bg-[#ddd3ca]">
    <span class="h-4 flex items-center text-[#b0a296]"><svg class="w-2 h-[5px] rotate-180"><use href="#chev"/></svg></span>
    <div class="w-[14px] flex-[435] rounded-xs border border-[#8c786c] bg-linear-to-r from-[#cdbeb2] to-[#b6a396]"></div>
    <div class="flex-[109]"></div>
    <span class="h-4 flex items-center"><svg class="w-2 h-[5px]"><use href="#chev"/></svg></span>
  </div>
</div>

<!-- Status bar -->
<footer class="h-[25px] shrink-0 flex items-center justify-between border-t border-[#b8a698] pl-2 pr-1">
  <span>Done</span>
  <svg class="w-[15px] h-4" viewBox="0 0 15 16"><path d="M.5 3.500h14v11.500H.5z" fill="#fafafa" stroke="#aaa"/><path d="M2 .500h4v3.500H2zM9 .500h4v3.500H9z" fill="#f0f0f0" stroke="#aaa"/><path d="M2 7h11" stroke="#ddd"/></svg>
</footer>

<!-- Taskbar -->
<div class="h-[26px] shrink-0 flex items-center border-t border-[#a8968a] pr-[2px]">
  <button class="size-[22px] rounded-xs border border-[#a8968a] bg-[#e0d6cc] flex items-center justify-center" aria-label="Show desktop"><svg class="size-4" viewBox="0 0 16 16"><path d="M.5 1.500h15v13H.5z" fill="#fff" stroke="#888"/><path d="M2 3h12v10H2z" fill="#7c2010"/><path d="M3 4.500h2v2H3zM3 8h2v2H3z" fill="#f0e0d8"/></svg></button>
  <svg class="w-[5px] h-3 mx-1" viewBox="0 0 5 12"><path d="M0 2h5M0 5h5M0 8h5" stroke="#a89a8e"/></svg>
  <button class="w-[199px] h-[22px] flex items-center gap-2 rounded-xs border border-[#a8968a] bg-linear-to-b from-[#f0ebe6] to-[#e0d6cc] pl-[6px]"><svg class="size-4" viewBox="0 0 16 16"><path d="M.5 14.500V1h5.500l1.500 2H15v11.500z" fill="#f6f2ea" stroke="#b0a090"/><path d="M1 15V5h6v10zM12 5h3.500v10H12z" fill="#eca848" stroke="#c07c20"/><path d="M8 5l6 6-2.500.3 1.500 3-1.500.7-1.500-3L8 14z" fill="#eee" stroke="#666" stroke-width=".8"/></svg>extensions - File Brow...</button>
  <button class="w-[200px] h-[22px] ml-[2px] flex items-center gap-2 rounded-xs border border-[#98867a] bg-linear-to-b from-[#cabbae] to-[#c2b2a4] pl-[6px]"><svg class="size-[17px]"><use href="#firefox"/></svg>Mango, by Serotonin - ...</button>
  <div class="ml-auto flex h-[21px] border border-[#8c786c]">
    <span class="w-8 flex items-center justify-center border border-white bg-[#c07858]"><svg class="size-4"><use href="#firefox"/></svg></span>
    <span class="w-8 bg-[#ad9b8a]"></span>
  </div>
  <svg class="w-[22px] h-6 ml-[3px]" viewBox="0 0 22 24"><path d="M1 8h20l-1 15H2z" fill="#ee9838" stroke="#b86c14"/><path d="M1 7l3-5 3 2 4-3 4 3 3-2 3 5z" fill="#eee" stroke="#999"/><path d="M0 6.500h22v3H0z" fill="#f8bc70" stroke="#b86c14" stroke-width=".7"/><path d="M8.500 15l2.500-3 2.500 3M15 16l1.500 3.500H13M7 16l-1.500 3.500H9.500" fill="none" stroke="#fff" stroke-width="1.800"/></svg>
</div>

<!-- Mouse pointer -->
<svg class="absolute left-[544px] top-[339px] w-3 h-5" viewBox="0 0 12 20"><path d="M.7 1v15.500l3.500-3.200 2.600 5.900 2.300-1-2.600-5.700h5z" fill="#fff" stroke="#111" stroke-width="1.200"/></svg>

<script>
  const points = ["AGRH,Tinggi", "LT01 Micella", "LT02Micella", "PCWPressure", "POLSA,Pressure", "PPREM2", "PRESETH", "SteamFlow", "TEvap", "TExtract", "TVAPO,T"];

  const watch = [
    ["TEvap", "43.975406646728516", "Apr 26 12:35"],
    ["TExtract", "57.68681335449219", "Apr 26 12:35"],
    ["SteamFlow", "211.55813598632812", "Apr 26 12:35"],
    ["PRESETH", "1266.228515625", "Apr 26 12:35"],
    ["LT01 Micella", "266.29229736328125", "Apr 26 12:35"],
    ["LT02Micella", "3002.637451171875", "Apr 26 12:35"],
    ["PCWPressure", "2.558525800704956", "Apr 26 12:35"],
    ["PPREM2", "999.93115234375", "Apr 26 12:35"],
    ["AGRH,Tinggi", "0.0", "Apr 23 17:00"],
    ["POLSA,Pressure", "0.0", "Apr 23 17:02"],
    ["TVAPO,T", "0.0", "Apr 23 17:01"],
  ];

  // the first branch has nothing above it, the last nothing below
  document.getElementById("points").innerHTML = points.map((name, i) => `
    <li class="h-[18px] flex items-center pl-[7px]">
      <span class="w-[11px] h-full flex flex-col">
        <span class="${i > 0 ? "h-[10px] border-l border-b border-[#777]" : "h-[10px] border-b border-[#777]"}"></span>
        ${i < points.length - 1 ? '<span class="flex-1 border-l border-[#777]"></span>' : ""}
      </span>
      <svg class="size-4 ml-[2px] mr-1"><use href="#brick"/></svg>
      <a href="#">ectract test - ${name}</a>
      <button class="ml-2" aria-label="Add to watch list"><svg class="size-[10px]"><use href="#arrow"/></svg></button>
    </li>`).join("");

  document.getElementById("watch").innerHTML = watch.map(([name, value, time], i) => `
    <tr class="group h-[31px] align-top">
      <td class="border-b border-[#68a030] group-last:border-b-0 pt-[5px] pl-1">${i > 0 ? '<svg class="size-3"><use href="#wrench"/></svg>' : ""}</td>
      <td class="border-b border-[#68a030] group-last:border-b-0 pt-[6px] font-bold">ectract test - ${name}</td>
      <td class="border-b border-[#68a030] group-last:border-b-0 pt-[6px] text-center">${value}</td>
      <td class="border-b border-[#68a030] group-last:border-b-0 pt-[6px] text-center">${time}</td>
      <td class="border-b border-[#68a030] group-last:border-b-0 pt-[3px]">
        <div class="flex items-center">
          <svg class="size-4 mr-[3px]"><use href="#brick"/></svg>
          ${i > 0 ? '<button aria-label="Move up"><svg class="w-[7px] h-[5px]"><use href="#up"/></svg></button>' : ""}
          ${i < watch.length - 1 ? '<button aria-label="Move down"><svg class="w-[7px] h-[5px]"><use href="#down"/></svg></button>' : ""}
          <button class="ml-[6px]" aria-label="Remove"><svg class="size-2"><use href="#minus"/></svg></button>
        </div>
      </td>
    </tr>`).join("");
</script>

</body>
</html>
